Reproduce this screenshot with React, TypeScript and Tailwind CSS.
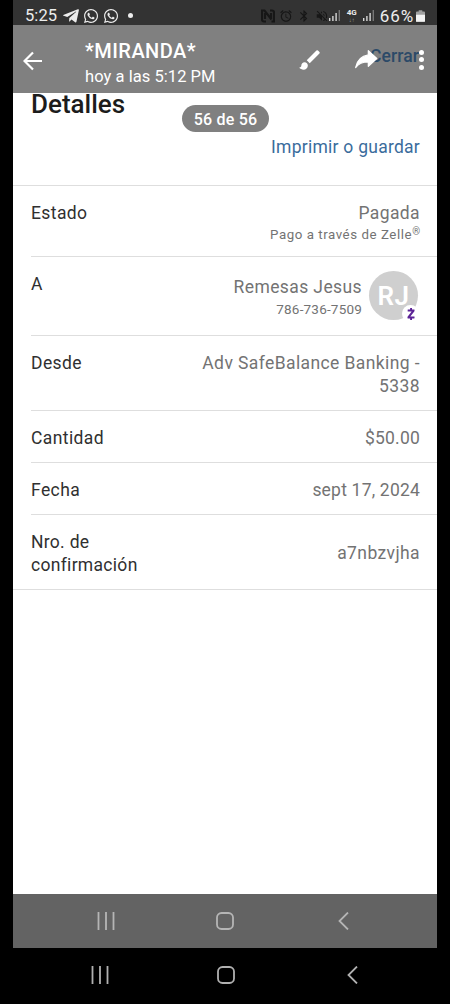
import type { ReactNode } from "react";
import { FaTelegramPlane, FaWhatsapp } from "react-icons/fa";
import { MdAlarm, MdBluetooth, MdBrush, MdVolumeOff } from "react-icons/md";
import { SiZelle } from "react-icons/si";

function Signal() {
  return (
    <svg width="12" height="11" viewBox="0 0 12 11" fill="#d8d8d8">
      <rect x="0" y="8" width="1.4" height="3" />
      <rect x="3.2" y="6" width="1.4" height="5" />
      <rect x="6.4" y="3" width="1.4" height="8" />
      <rect x="9.6" y="0" width="1.4" height="11" fill="#777777" />
    </svg>
  );
}

function StatusBar() {
  return (
    <div className="flex h-[25px] items-center bg-[#333333] pl-3 pr-[12px] pt-[6px] text-[#ededed]">
      <span className="w-[37px] text-[16.5px] leading-5 tracking-[0.1px]">5:25</span>
      <FaTelegramPlane size={18} />
      <FaWhatsapp size={16} className="ml-[3px]" />
      <FaWhatsapp size={16} className="ml-[4px]" />
      <span className="ml-[9px] h-[5px] w-[5px] rounded-full bg-[#ededed]" />
      <div className="ml-auto flex items-center gap-[4px] text-[#171717]">
        <svg width="14" height="14" viewBox="0 0 14 14" fill="none" stroke="currentColor" strokeWidth="2.200">
          <path d="M5 12.500H3a2 2 0 0 1-2-2V1.500h2.500l7 9M9 1.500h2a2 2 0 0 1 2 2v9h-2.500M4 4v6M10 4v6" />
        </svg>
        <MdAlarm size={14} stroke="currentColor" />
        <MdBluetooth size={14} stroke="currentColor" />
        <MdVolumeOff size={14} stroke="currentColor" />
      </div>
      <Signal />
      <div className="ml-[5px] flex w-[12px] flex-col items-center">
        <span className="text-[8px] font-bold leading-[8px]">4G</span>
        <span className="text-[6px] leading-[6px] text-[#999999]">↓↑</span>
      </div>
      <div className="ml-[5px]">
        <Signal />
      </div>
      <span className="ml-[5px] text-[17px] leading-5 tracking-[0.9px]">66%</span>
      <svg className="ml-[2px]" width="9" height="12" viewBox="0 0 10 13">
        <path d="M3 0h4v1.5H9a1 1 0 0 1 1 1V12a1 1 0 0 1-1 1H1a1 1 0 0 1-1-1V2.500a1 1 0 0 1 1-1h2z" fill="#a0a0a0" />
        <path d="M0 5h10v7a1 1 0 0 1-1 1H1a1 1 0 0 1-1-1z" fill="#f3f3f3" />
      </svg>
    </div>
  );
}

function ViewerHeader() {
  return (
    <div className="relative flex h-[68px] items-start bg-[#808080] text-white">
      <svg className="ml-[10px] mt-[26px]" width="20" height="20" viewBox="0 0 20 20" fill="none" stroke="white" strokeWidth="2.200">
        <path d="M19 10H1.500M10 1.500L1.500 10L10 18.500" />
      </svg>
      <div className="ml-[42px] mt-[14px] whitespace-nowrap">
        <p className="text-[20px] font-medium leading-6 tracking-[0.450px]">*MIRANDA*</p>
        <p className="mt-[3px] text-[16.5px] leading-[22px] tracking-[0.050px]">hoy a las 5:12 PM</p>
      </div>
      <span className="absolute right-[18px] top-[20px] text-[17.5px] font-medium leading-[23px] tracking-[0.1px] text-[#2c4a68]">
        Cerrar
      </span>
      <MdBrush size={26} className="absolute left-[284px] top-[22px]" />
      <svg
        className="absolute left-[339px] top-[19px]"
        width="29"
        height="29"
        viewBox="0 0 24 24"
        fill="white"
        stroke="white"
        strokeLinejoin="round"
      >
        <path d="M13.500 9V5.500l7 6.500-7 6.500v-3.600c-5 0-8 1.200-10.500 4.600 1-5 4-9.500 10.500-10.500z" />
      </svg>
      <div className="absolute right-[13px] top-[25px] flex flex-col gap-[2.400px]">
        <span className="h-[5px] w-[5px] rounded-full bg-white" />
        <span className="h-[5px] w-[5px] rounded-full bg-white" />
        <span className="h-[5px] w-[5px] rounded-full bg-white" />
      </div>
    </div>
  );
}

function Row({ label, height, children }: { label: ReactNode; height: string; children: ReactNode }) {
  return (
    <div className={`flex justify-between border-b border-[#dedede] pr-[17px] pt-[16px] ${height}`}>
      <span className="text-[#303030]">{label}</span>
      <div className="text-right text-[#737373]">{children}</div>
    </div>
  );
}

function NavIcons({ className, backMargin }: { className: string; backMargin: string }) {
  return (
    <div className={`flex items-center ${className}`}>
      <svg width="18" height="18" viewBox="0 0 18 18" stroke="currentColor" strokeWidth="1.800">
        <path d="M1.500 0V18M9 0V18M16.500 0V18" />
      </svg>
      <svg width="18" height="18" viewBox="0 0 18 18" fill="none" stroke="currentColor" strokeWidth="1.800">
        <rect x="1" y="1" width="16" height="16" rx="4.500" />
      </svg>
      <svg className={backMargin} width="11" height="18" viewBox="0 0 11 18" fill="none" stroke="currentColor" strokeWidth="1.800">
        <path d="M10 0.500L1.500 9L10 17.500" />
      </svg>
    </div>
  );
}

export default function App() {
  return (
    <div className="h-[1004px] w-[450px] bg-black font-['Roboto',sans-serif]">
      <div className="ml-[13px] w-[424px]">
        <StatusBar />
        <ViewerHeader />

        <main className="h-[801px] bg-white text-[17.5px] font-[450] leading-[23px] tracking-[0.4px]">
          <div className="relative h-[93px] border-b border-[#dedede] pl-[18px] pr-[17px]">
            <h1 className="text-[26px] font-medium leading-[22px] tracking-normal text-[#1c1c1c]">Detalles</h1>
            <p className="mt-[21px] text-right tracking-[0.250px] text-[#3a6c9c]">Imprimir o guardar</p>
            <span className="absolute left-[169px] top-[12px] h-[27px] w-[87px] whitespace-nowrap rounded-full bg-[#808080] text-center text-[16px] font-medium leading-[30px] tracking-[0.2px] text-white">
              56 de 56
            </span>
          </div>

          <div className="pl-[18px]">
            <Row label="Estado" height="h-[71px]">
              <p>Pagada</p>
              <p className="text-[13.300px] leading-[20px] tracking-[0.550px]">
                Pago a través de Zelle<span className="relative top-[-4px] text-[10px] tracking-normal">®</span>
              </p>
            </Row>
            <Row label="A" height="h-[79px]">
              <div className="flex gap-[7px]">
                <div className="pt-[3px]">
                  <p>Remesas Jesus</p>
                  <p className="text-[13.500px] leading-[21px] tracking-[0.2px]">786-736-7509</p>
                </div>
                <div className="relative mr-[2px] mt-[-2px] flex h-[49px] w-[49px] items-center justify-center rounded-full bg-[#cfcfcf] text-[26px] font-semibold leading-none tracking-[0.5px] text-white">
                  RJ
                  <span className="absolute bottom-[-2px] right-[-1px] flex h-[17px] w-[17px] items-center justify-center rounded-full bg-white text-[#5b2396]">
                    <SiZelle size={12} />
                  </span>
                </div>
              </div>
            </Row>
            <Row label="Desde" height="h-[75px]">
              Adv SafeBalance Banking -<br />
              5338
            </Row>
            <Row label="Cantidad" height="h-[52px]">
              <span className="tracking-[0.2px]">$50.00</span>
            </Row>
            <Row label="Fecha" height="h-[52px]">
              <span className="tracking-[0.2px]">sept 17, 2024</span>
            </Row>
          </div>
          <div className="flex h-[75px] items-start justify-between border-b border-[#dedede] pl-[18px] pr-[17px] pt-[16px]">
            <span className="tracking-[0.3px] text-[#303030]">
              Nro. de<br />
              confirmación
            </span>
            <span className="mt-[11px] text-[#737373]">a7nbzvjha</span>
          </div>
        </main>

        <NavIcons className="h-[54px] gap-[101px] bg-[#636363] pl-[84px] text-[#b5b5b5]" backMargin="ml-[3px]" />
      </div>
      <NavIcons className="h-[54px] gap-[108px] pl-[91px] text-[#b0b0b0]" backMargin="ml-[4px]" />
    </div>
  );
}
